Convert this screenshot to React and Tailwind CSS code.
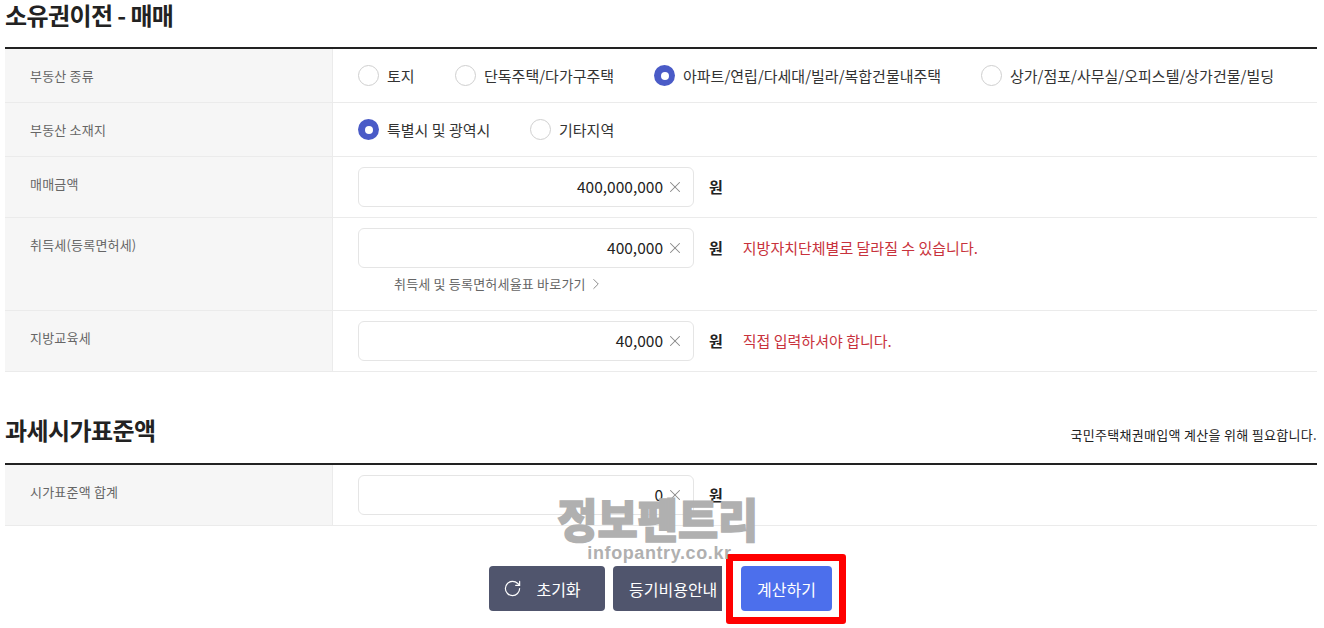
import React from 'react';
import { RotateCw, X, ChevronRight } from 'lucide-react';

const FONT = "font-['Noto_Sans_CJK_KR','Noto_Sans',sans-serif]";

const Radio = ({ label, checked, className = '' }) => (
    <label className={`flex items-center gap-[8px] ${className}`}>
        {checked ? (
            <span className="w-[21px] h-[21px] rounded-full bg-[#4a5bc7] flex items-center justify-center">
                <span className="w-2 h-2 rounded-full bg-white"></span>
            </span>
        ) : (
            <span className="w-[21px] h-[21px] rounded-full border border-[#cfcfcf] bg-white"></span>
        )}
        <span className="text-[15px] leading-[20px] text-[#333]">{label}</span>
    </label>
);

const Row = ({ label, height, children }) => (
    <div className={`flex border-b border-[#ebebeb] ${height}`}>
        <div className="w-[328px] shrink-0 bg-[#f6f6f6] border-r border-[#ebebeb] pl-[25px] pt-[17px] text-[13px] leading-[20px] tracking-[0.2px] text-[#666]">
            {label}
        </div>
        <div className="flex-1 pl-[25px]">{children}</div>
    </div>
);

const Amount = ({ value, note }) => (
    <div className="flex items-center pt-[10px]">
        <div className="w-[336px] h-10 border border-[#e5e5e5] rounded-md bg-white flex items-center justify-end pr-[9px] gap-[3px]">
            <span className="text-[15.5px] text-[#222]">{value}</span>
            <X size={18} className="text-[#888]" strokeWidth={1.4} />
        </div>
        <span className="ml-[15px] text-[15px] font-bold text-[#222]">원</span>
        {note && <span className="ml-[20px] text-[15px] text-[#c8323c]">{note}</span>}
    </div>
);

const App = () => {
    return (
        <div className={`relative w-[1324px] h-[628px] bg-white overflow-hidden px-[5px] mx-auto ${FONT}`}>
            <h2 className="h-[47px] text-[24px] leading-[30px] font-bold text-[#222] tracking-[-0.6px]">
                소유권이전 - 매매
            </h2>
            <div className="w-[1312px] border-t-2 border-[#222]">
                <Row label="부동산 종류" height="h-[54px]">
                    <div className="flex items-center h-full">
                        <Radio label="토지" className="w-[97px]" />
                        <Radio label="단독주택/다가구주택" className="w-[199px]" />
                        <Radio checked label="아파트/연립/다세대/빌라/복합건물내주택" className="w-[327px]" />
                        <Radio label="상가/점포/사무실/오피스텔/상가건물/빌딩" />
                    </div>
                </Row>
                <Row label="부동산 소재지" height="h-[54px]">
                    <div className="flex items-center h-full">
                        <Radio checked label="특별시 및 광역시" className="w-[172px]" />
                        <Radio label="기타지역" />
                    </div>
                </Row>
                <Row label="매매금액" height="h-[61px]">
                    <Amount value="400,000,000" />
                </Row>
                <Row label="취득세(등록면허세)" height="h-[93px]">
                    <Amount value="400,000" note="지방자치단체별로 달라질 수 있습니다." />
                    <a className="flex items-center mt-[6px] ml-[36px] text-[13px] leading-[20px] tracking-[0.2px] text-[#666]">
                        취득세 및 등록면허세율표 바로가기
                        <ChevronRight size={18} strokeWidth={1} className="ml-[1px]" />
                    </a>
                </Row>
                <Row label="지방교육세" height="h-[61px]">
                    <Amount value="40,000" note="직접 입력하셔야 합니다." />
                </Row>
            </div>

            <div className="w-[1312px] flex items-end justify-between h-[91px] pb-[18px]">
                <h2 className="text-[24px] leading-[30px] font-bold text-[#222] tracking-[-0.6px]">과세시가표준액</h2>
                <span className="mb-[1px] text-[13px] tracking-[0.3px] text-[#222]">국민주택채권매입액 계산을 위해 필요합니다.</span>
            </div>
            <div className="w-[1312px] border-t-2 border-[#222]">
                <Row label="시가표준액 합계" height="h-[61px]">
                    <Amount value="0" />
                </Row>
            </div>

            <div className="flex justify-center mt-[40px] pr-[3px]">
                <button className="w-[116px] h-[45px] rounded bg-[#50556d] text-white text-[16px] flex items-center justify-center gap-[14px] pr-[10px]">
                    <RotateCw size={19} strokeWidth={1.5} />
                    초기화
                </button>
                <button className="ml-2 w-[109px] h-[45px] rounded-l bg-[#50556d] text-white text-[16px] whitespace-nowrap pl-[16px] text-left">등기비용안내</button>
                <button className="ml-[19px] w-[91px] h-[45px] rounded bg-[#4c6fec] text-white text-[16px]">계산하기</button>
            </div>

            {/* 빨간 강조 박스 */}
            <div className="absolute left-[726px] top-[554px] w-[120px] h-[70px] border-[7px] border-[#ff0000] rounded-[3px]"></div>

            {/* 워터마크 */}
            <div className="absolute left-[557px] top-[490px] w-[202px] flex flex-col items-center text-[#b0b0b0] pointer-events-none">
                <span className="text-[46px] leading-[54px] font-black whitespace-nowrap scale-x-[0.95] [-webkit-text-stroke:1.5px_#b0b0b0]">정보팬트리</span>
                <span className="-mt-[1px] ml-[3px] text-[18px] leading-[20px] font-bold font-['Liberation_Sans',sans-serif] tracking-[0.6px] whitespace-nowrap">infopantry.co.kr</span>
            </div>
        </div>
    );
};

export default App;
